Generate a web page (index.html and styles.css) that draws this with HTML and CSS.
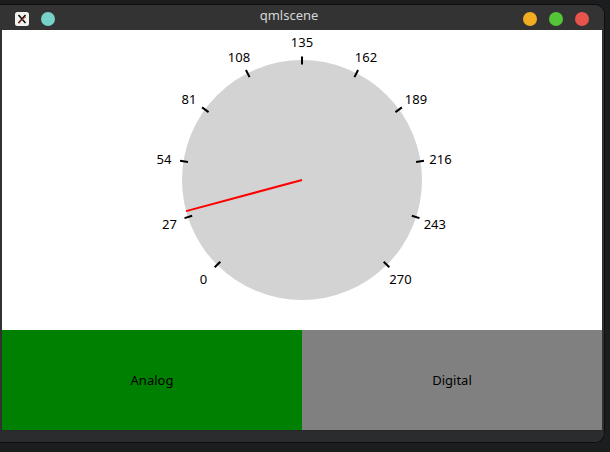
FILE: index.html
```html
<!DOCTYPE html>
<html>
<head>
<meta charset="utf-8">
<title>qmlscene</title>
<link rel="stylesheet" href="styles.css">
</head>
<body>
<div class="window">
  <div class="titlebar">
    <svg class="app-icon" width="14" height="14" viewBox="0 0 14 14">
      <rect x="0" y="0" width="14" height="14" rx="2.5" fill="#f4f2ee"/>
      <path d="M3.5 3 L10.5 11 M10.5 3 L3.5 11" stroke="#111" stroke-width="1.6"/>
      <path d="M4 11.5 C6 8 8 6.5 11 5" stroke="#d2472f" stroke-width="1" fill="none"/>
    </svg>
    <span class="dot teal"></span>
    <span class="title">qmlscene</span>
    <span class="dot orange"></span>
    <span class="dot green"></span>
    <span class="dot red"></span>
  </div>
  <div class="content">
    <div class="gauge-area">
      <svg class="gauge" width="600" height="300" viewBox="0 0 600 300">
        <circle cx="300" cy="150" r="120" fill="#d3d3d3"/>
        <g transform="translate(300,150)" stroke="#000" stroke-width="2">
          <line x1="0" y1="-115.5" x2="0" y2="-123.5" transform="rotate(-135)"/>
          <line x1="0" y1="-115.5" x2="0" y2="-123.5" transform="rotate(-108)"/>
          <line x1="0" y1="-115.5" x2="0" y2="-123.5" transform="rotate(-81)"/>
          <line x1="0" y1="-115.5" x2="0" y2="-123.5" transform="rotate(-54)"/>
          <line x1="0" y1="-115.5" x2="0" y2="-123.5" transform="rotate(-27)"/>
          <line x1="0" y1="-115.5" x2="0" y2="-123.5" transform="rotate(0)"/>
          <line x1="0" y1="-115.5" x2="0" y2="-123.5" transform="rotate(27)"/>
          <line x1="0" y1="-115.5" x2="0" y2="-123.5" transform="rotate(54)"/>
          <line x1="0" y1="-115.5" x2="0" y2="-123.5" transform="rotate(81)"/>
          <line x1="0" y1="-115.5" x2="0" y2="-123.5" transform="rotate(108)"/>
          <line x1="0" y1="-115.5" x2="0" y2="-123.5" transform="rotate(135)"/>
        </g>
        <g class="labels" text-anchor="middle">
          <text x="201.5" y="254.4">0</text>
          <text x="167.5" y="199.1">27</text>
          <text x="162" y="134.4">54</text>
          <text x="187" y="74.4">81</text>
          <text x="237" y="32.3">108</text>
          <text x="300" y="16.8">135</text>
          <text x="364" y="32.3">162</text>
          <text x="414" y="74.4">189</text>
          <text x="438.5" y="134.4">216</text>
          <text x="432.8" y="199.1">243</text>
          <text x="398.5" y="254.4">270</text>
        </g>
        <line x1="300" y1="150" x2="184.1" y2="181.1" stroke="#ff0000" stroke-width="2"/>
      </svg>
    </div>
    <div class="modes">
      <div class="mode analog">Analog</div>
      <div class="mode digital">Digital</div>
    </div>
  </div>
  <div class="bottom"></div>
</div>
</body>
</html>
```

FILE: styles.css
```css
html, body {
  margin: 0;
  padding: 0;
  background: #1c1d1f;
}
body {
  width: 610px;
  height: 452px;
  overflow: hidden;
  font-family: "Noto Sans", "DejaVu Sans", sans-serif;
}
.window {
  box-sizing: border-box;
  width: 605px;
  margin-top: 4px;
  background: #323233;
  border: 1px solid #0e0e0f;
  border-left: none;
  border-radius: 0 10px 10px 0;
  display: flex;
  flex-direction: column;
  overflow: hidden;
}
.titlebar {
  height: 25px;
  display: flex;
  align-items: flex-start;
  padding: 0 15px 0 15px;
  gap: 12px;
  background: #333334;
}
.app-icon {
  flex: none;
  margin-top: 7px;
}
.dot {
  flex: none;
  width: 14px;
  height: 14px;
  border-radius: 50%;
  margin-top: 7px;
}
.teal { background: #79d2ca; }
.orange { background: #f1ac1f; }
.green { background: #53c536; }
.red { background: #e8544b; }
.title {
  flex: 1;
  text-align: center;
  font-size: 13px;
  line-height: 16px;
  margin-top: 2px;
  color: #d6d6d6;
}
.content {
  margin: 0 2px;
  width: 600px;
  height: 400px;
  background: #ffffff;
  display: flex;
  flex-direction: column;
}
.gauge-area {
  height: 300px;
}
.gauge {
  display: block;
}
.labels {
  font-family: "Noto Sans", "DejaVu Sans", sans-serif;
  font-size: 13px;
  fill: #000;
}
.modes {
  height: 100px;
  display: grid;
  grid-template-columns: 300px 300px;
}
.mode {
  display: flex;
  align-items: center;
  justify-content: center;
  font-size: 13px;
  color: #000;
}
.analog { background: #008000; }
.digital { background: #808080; }
.bottom {
  height: 12px;
  background: #2b2c2e;
  border-top: 1px solid #27282a;
  box-sizing: border-box;
}
```
